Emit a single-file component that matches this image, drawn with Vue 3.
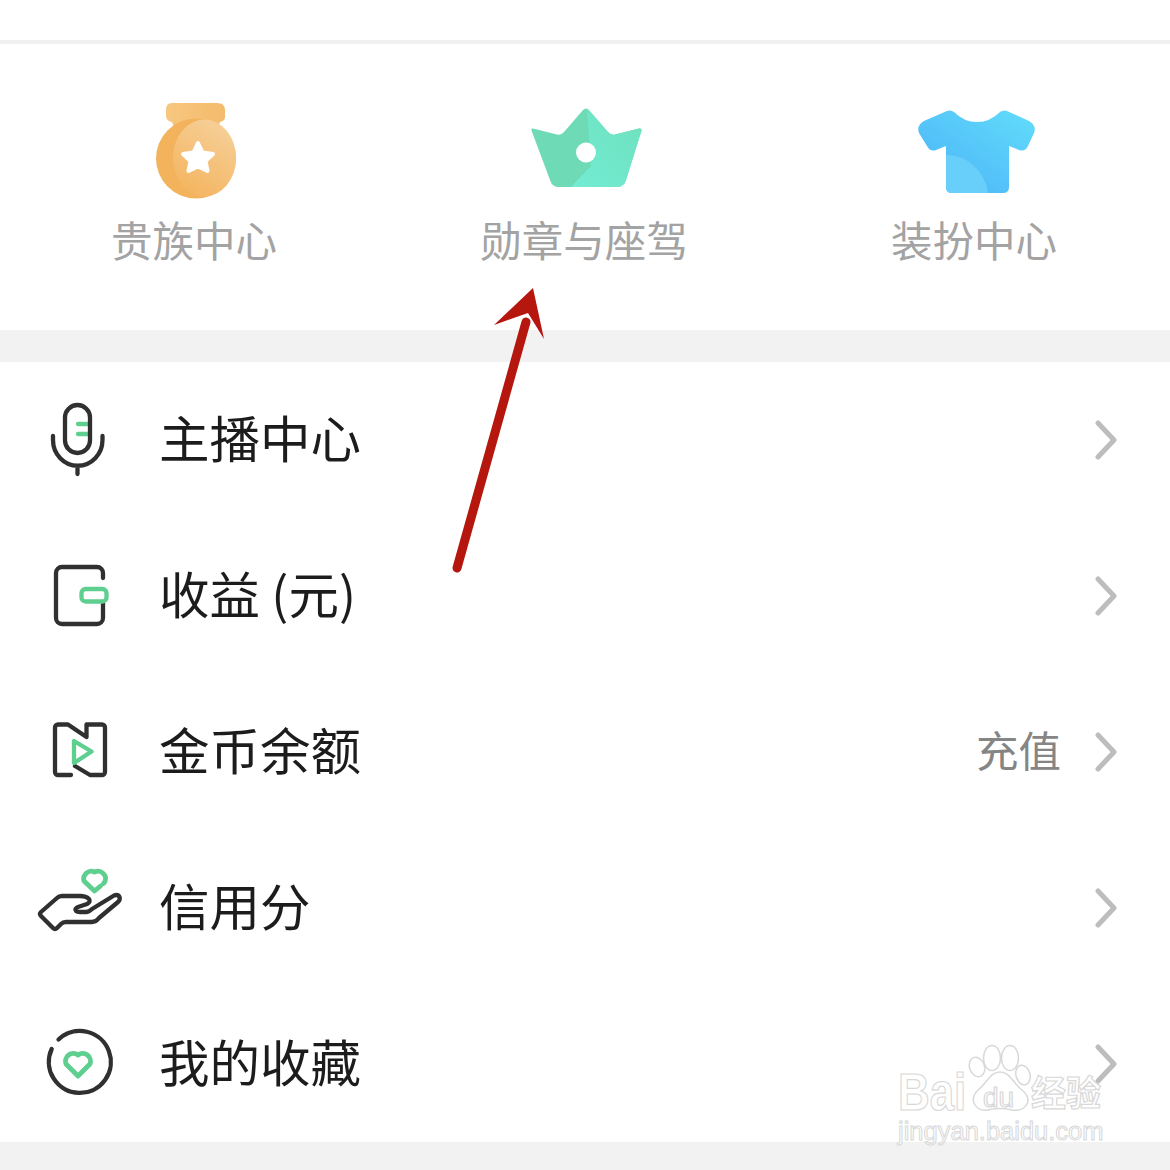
<script setup>
const quick = [
  { label: '贵族中心', kind: 'medal' },
  { label: '勋章与座驾', kind: 'crown' },
  { label: '装扮中心', kind: 'shirt' },
]
const rows = [
  { label: '主播中心', icon: 'mic' },
  { label: '收益 (元)', icon: 'wallet' },
  { label: '金币余额', icon: 'coin', extra: '充值' },
  { label: '信用分', icon: 'hand' },
  { label: '我的收藏', icon: 'fav' },
]
const boxes = { mic: '0 0 100 100', wallet: '0 -4 100 100', coin: '0 -3 100 100', hand: '0 -2 100 100', fav: '0 -1 100 100' }
</script>

<template>
  <div class="page">
    <div class="top-space"></div>
    <section class="quick">
      <div v-for="q in quick" :key="q.kind" class="quick-item">
        <svg v-if="q.kind === 'medal'" class="quick-icon" viewBox="134 100 120 100">
          <defs>
            <linearGradient id="mg" x1="0.8" y1="0" x2="0.3" y2="1">
              <stop offset="0" stop-color="#f6d09a" />
              <stop offset="1" stop-color="#f4b560" />
            </linearGradient>
            <linearGradient id="ms" x1="0" y1="0" x2="1" y2="0">
              <stop offset="0" stop-color="#f7c77f" />
              <stop offset="1" stop-color="#f4bb6c" />
            </linearGradient>
          </defs>
          <path d="M171 103 H216 Q224 103 224 110 V117 Q224 121 219 122 L216 130 H174 L171 122 Q165 121 165 116 V110 Q165 103 171 103 Z" fill="url(#ms)" />
          <circle cx="195" cy="158.500" r="40" fill="#f3b35c" />
          <ellipse cx="203.500" cy="158" rx="31.500" ry="38.500" fill="url(#mg)" />
          <path d="M197 143 L201.500 152.500 L212 154 L204.500 161 L206.500 171 L197 166.500 L187.500 171 L189.500 161 L182 154 L192.500 152.500 Z" fill="#fff" stroke="#fff" stroke-width="4" stroke-linejoin="round" />
        </svg>
        <svg v-else-if="q.kind === 'crown'" class="quick-icon" viewBox="524 100 120 100">
          <defs>
            <linearGradient id="cl" x1="0" y1="1" x2="1" y2="0">
              <stop offset="0" stop-color="#72ecd4" />
              <stop offset="1" stop-color="#6fe0bd" />
            </linearGradient>
          </defs>
          <path d="M532 128.500 L556 134.500 Q560 135.500 563 132 L582 110 Q585 107 588 110 L607 132 Q610 135.500 614 134.500 L638 128.500 Q641 128 640.500 130.500 L625 180 Q623 187 616 187 H557 Q551 187 549 180 L530.500 130.500 Q530 128 532 128.500 Z" fill="#6fdbb6" />
          <path d="M586 108.500 L607 132 Q610 135.500 614 134.500 L638 128.500 Q641 128 640.500 130.500 L625 180 Q623 187 616 187 H570 L590 166 Z" fill="url(#cl)" />
          <circle cx="585" cy="152.500" r="10" fill="#fff" />
        </svg>
        <svg v-else class="quick-icon" viewBox="914 100 120 100">
          <defs>
            <linearGradient id="sg" x1="0" y1="1" x2="1" y2="0">
              <stop offset="0" stop-color="#4ab2f7" />
              <stop offset="1" stop-color="#62dcfb" />
            </linearGradient>
          </defs>
          <path d="M946 111 Q950 109.500 953 112 Q963 122 976 122 Q989 122 999 112 Q1002 109.500 1006 111 L1027 120.500 Q1036 125 1033 133 L1027 146 Q1024 152 1018 150 L1008 146 V187 Q1008 193 1002 193 H951 Q945 193 945 187 V146 L935 150 Q929 152 926 146 L918 133 Q915 125 924 120.500 Z" fill="url(#sg)" />
          <path d="M945 155 Q962 155 973 166 Q985 177 987 193 H951 Q945 193 945 187 Z" fill="#68cffb" />
        </svg>
        <div class="quick-label">{{ q.label }}</div>
      </div>
    </section>
    <div class="band"></div>
    <ul class="menu">
      <li v-for="r in rows" :key="r.icon" class="row">
        <svg class="row-icon" :viewBox="boxes[r.icon]" fill="none" stroke-width="4.300" stroke-linecap="round" stroke-linejoin="round">
          <g v-if="r.icon === 'mic'">
            <path d="M48 34 H59 M48 44 H59" class="g" />
            <rect x="35" y="15" width="25" height="48" rx="12.500" class="d" />
            <path d="M23 46 V50 A24.500 25.500 0 0 0 72.500 50 V46 M47.500 76 V84" class="d" />
          </g>
          <g v-else-if="r.icon === 'wallet'">
            <path d="M73 28 V23 A6 6 0 0 0 67 17 H32 A6 6 0 0 0 26 23 V68 A6 6 0 0 0 32 74 H67 A6 6 0 0 0 73 68 V53" class="d" />
            <rect x="51.500" y="39" width="25" height="12.500" rx="4" class="g" />
          </g>
          <g v-else-if="r.icon === 'coin'">
            <path d="M41 70 H28 A3 3 0 0 1 25 67 V22.500 A3 3 0 0 1 28 19.500 H38 L56.500 32 V19.500 H72 A3 3 0 0 1 75 22.500 V67 A3 3 0 0 1 72 70 H60 L45 61" class="d" />
            <path d="M44 36 V58 L61.500 46.500 Z" class="g" />
          </g>
          <g v-else-if="r.icon === 'hand'">
            <path d="M11 52 L27 38 Q29 36 32 36 H50 Q56 36 59 39 Q61 42 57 44 L48 47 Q44 49 46 51 Q47 52 50 52 H56 Q59 52 62 49 L84 35.500 Q88 34 89.500 37 Q90.500 40 88 42 L69 58 Q66 62 62 62 H36 Q33 62 31 64 L27 68 Q25 70 23 68 L11 56 Q9 54 11 52 Z" class="d" />
            <path d="M70.500 26 L64.500 31 L54 21 A7.600 7.600 0 0 1 64.500 12 A7.600 7.600 0 0 1 75 21.500 L73.500 23.500" class="g" stroke-width="4.800" />
          </g>
          <g v-else>
            <path d="M28.500 24.500 A31 31 0 1 1 21.700 34" class="d" />
            <path d="M48 61 L36 49 A7.800 7.800 0 0 1 48 40 A7.800 7.800 0 0 1 60 49 Z" class="g" stroke-width="4.800" />
          </g>
        </svg>
        <span class="row-label">{{ r.label }}</span>
        <span v-if="r.extra" class="row-extra">{{ r.extra }}</span>
        <svg class="chev" viewBox="0 0 24 40" fill="none">
          <path d="M4 3 L20 20 L4 37" stroke="#bdbdbd" stroke-width="5" stroke-linecap="round" stroke-linejoin="round" />
        </svg>
      </li>
    </ul>
    <div class="band bottom"></div>

    <svg class="arrow" viewBox="0 0 1170 1170">
      <path d="M457 568 L526 322" stroke="#b5170f" stroke-width="9" stroke-linecap="round" fill="none" />
      <path d="M533 288 L544 339 L528 313 L494 325 Z" fill="#b5170f" />
    </svg>

    <div class="mark">
      <svg class="paw" viewBox="960 1040 80 80">
        <g fill="#fff" fill-opacity=".7" stroke="#d8d8d8" stroke-width="1.500">
          <ellipse cx="977" cy="1067" rx="7.500" ry="10" transform="rotate(-20 977 1067)" />
          <ellipse cx="992" cy="1058" rx="8.500" ry="12.500" />
          <ellipse cx="1010" cy="1058" rx="8.500" ry="12.500" />
          <ellipse cx="1023" cy="1075" rx="7" ry="10" transform="rotate(-15 1023 1075)" />
          <path d="M1000 1072 C1010 1072 1012 1082 1022 1090 C1034 1100 1026 1112 1012 1110 C1004 1108 996 1108 988 1110 C976 1112 968 1100 978 1090 C988 1082 990 1072 1000 1072 Z" />
        </g>
      </svg>
      <span class="mk bai">Bai</span>
      <span class="mk du">du</span>
      <span class="mk jy">经验</span>
      <span class="mk url">jingyan.baidu.com</span>
    </div>
  </div>
</template>

<style scoped>
.page {
  position: relative;
  width: 1170px;
  height: 1170px;
  overflow: hidden;
  background: #fff;
  font-family: "Noto Sans CJK SC", "Noto Sans", sans-serif;
}
.top-space {
  height: 40px;
  border-bottom: 4px solid #f0f0f0;
}
.quick {
  height: 286px;
  display: grid;
  grid-template-columns: repeat(3, 390px);
  box-sizing: border-box;
  padding-top: 56px;
}
.quick-item {
  display: flex;
  flex-direction: column;
  align-items: center;
}
.quick-icon {
  width: 120px;
  height: 100px;
}
.quick-label {
  margin-top: 9px;
  margin-right: 2px;
  font-size: 41.500px;
  line-height: 60px;
  color: #a3a3a3;
  font-weight: 400;
}
.band {
  height: 32px;
  background: #f2f2f2;
}
.band.bottom {
  height: 28px;
}
.menu {
  list-style: none;
  margin: 0;
  padding: 0;
}
.row {
  height: 156px;
  display: flex;
  align-items: center;
  padding: 0 52px 0 30px;
}
.row-icon {
  width: 100px;
  height: 100px;
  flex: none;
}
.d { stroke: #303030; }
.g { stroke: #5ecf8f; }
.row-label {
  margin-left: 29px;
  margin-bottom: 8px;
  font-size: 50.500px;
  line-height: 70px;
  color: #1c1c1c;
  flex: 1;
}
.row-extra {
  font-size: 42.500px;
  line-height: 60px;
  color: #858585;
  margin-right: 33px;
  margin-bottom: 6px;
}
.chev {
  width: 24px;
  height: 40px;
  flex: none;
}
.arrow {
  position: absolute;
  inset: 0;
  width: 1170px;
  height: 1170px;
  pointer-events: none;
}
.mark {
  position: absolute;
  left: 890px;
  top: 1040px;
  width: 230px;
  height: 110px;
}
.paw {
  position: absolute;
  left: 70px;
  top: 0;
  width: 80px;
  height: 80px;
}
.mk {
  position: absolute;
  color: rgba(255, 255, 255, 0.7);
  -webkit-text-stroke: 1.200px #d8d8d8;
  white-space: nowrap;
  font-family: "Liberation Sans", sans-serif;
}
.bai {
  left: 8px;
  top: 24px;
  font-size: 51px;
  line-height: 58px;
  font-weight: 700;
  transform: scaleX(0.86);
  transform-origin: left center;
}
.du {
  left: 93px;
  top: 40px;
  font-size: 28px;
  line-height: 36px;
}
.jy {
  left: 141px;
  top: 31px;
  font-size: 35px;
  line-height: 40px;
  font-weight: 700;
  font-family: "Noto Sans CJK SC", sans-serif;
}
.url {
  left: 8px;
  top: 76px;
  font-size: 25.500px;
  line-height: 30px;
  -webkit-text-stroke: 1px #d8d8d8;
}
</style>

<style>
html, body { margin: 0; background: #fff; }
</style>
